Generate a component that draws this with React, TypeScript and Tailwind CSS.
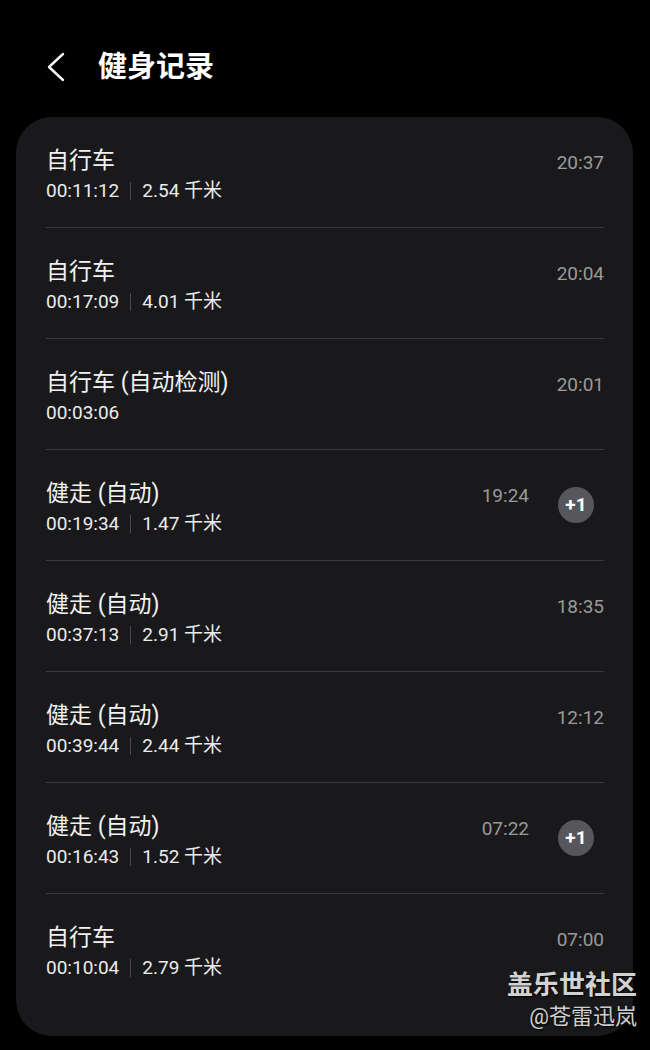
import React from "react";

type Item = { title: string; dur: string; dist?: string; time: string; badge?: boolean };

const items: Item[] = [
  { title: "自行车", dur: "00:11:12", dist: "2.54 千米", time: "20:37" },
  { title: "自行车", dur: "00:17:09", dist: "4.01 千米", time: "20:04" },
  { title: "自行车 (自动检测)", dur: "00:03:06", time: "20:01" },
  { title: "健走 (自动)", dur: "00:19:34", dist: "1.47 千米", time: "19:24", badge: true },
  { title: "健走 (自动)", dur: "00:37:13", dist: "2.91 千米", time: "18:35" },
  { title: "健走 (自动)", dur: "00:39:44", dist: "2.44 千米", time: "12:12" },
  { title: "健走 (自动)", dur: "00:16:43", dist: "1.52 千米", time: "07:22", badge: true },
  { title: "自行车", dur: "00:10:04", dist: "2.79 千米", time: "07:00" },
];

const font = { fontFamily: 'Roboto, "Noto Sans CJK SC", sans-serif' };

function Row({ item, last }: { item: Item; last: boolean }) {
  return (
    <div className={last ? "h-[142px]" : "h-[111px] pb-[1px]"}>
      <div className="flex h-[110px]">
        <div className="flex-1 pt-[29px]">
          <div className="text-[23px] leading-[30px] text-[#f2f2f2]">{item.title}</div>
          <div className="flex items-center text-[19px] leading-[30px] text-[#ececec]">
            <span>{item.dur}</span>
            {item.dist && (
              <>
                <span className="mx-[11px] h-[18px] w-px bg-[#4a4a4c]" />
                <span>{item.dist}</span>
              </>
            )}
          </div>
        </div>
        <div className="pt-[31px] text-[19px] leading-[30px] text-[#9a9a9a]">{item.time}</div>
        {item.badge && (
          <div className="ml-[29px] mr-[10px] flex h-[36px] w-[36px] items-center justify-center self-center rounded-full bg-[#57575b] text-[19px] font-bold text-white">
            +1
          </div>
        )}
      </div>
      {!last && <div className="h-px bg-[#3a3a3c]" />}
    </div>
  );
}

export default function App() {
  return (
    <div className="relative min-h-[1050px] w-[650px] overflow-hidden bg-black" style={font}>
      <div className="flex h-[117px] items-start pt-[50px]">
        <svg className="ml-[46px] mt-[2px]" width="20" height="30" viewBox="0 0 20 30" fill="none">
          <path d="M17 2 L3 15 L17 28" stroke="#f5f5f5" strokeWidth="2.4" strokeLinecap="round" strokeLinejoin="round" />
        </svg>
        <div className="ml-[32px] text-[29px] font-bold leading-[34px] text-white">健身记录</div>
      </div>
      <div className="mx-4 w-[617px] rounded-[36px] bg-[#19191b] pl-[30px] pr-[29px]">
        {items.map((it, i) => (
          <Row key={i} item={it} last={i === items.length - 1} />
        ))}
      </div>
      <div className="absolute right-[13px] top-[968px] flex flex-col items-end">
        <div
          className="text-[26px] font-bold leading-[34px] text-[#d2d2d2]"
          style={{ textShadow: "1px 1px 2px #000" }}
        >
          盖乐世社区
        </div>
        <div className="text-[22px] leading-[30px] text-[#cfcfcf]" style={{ textShadow: "1px 1px 2px #000" }}>
          @苍雷迅岚
        </div>
      </div>
    </div>
  );
}
